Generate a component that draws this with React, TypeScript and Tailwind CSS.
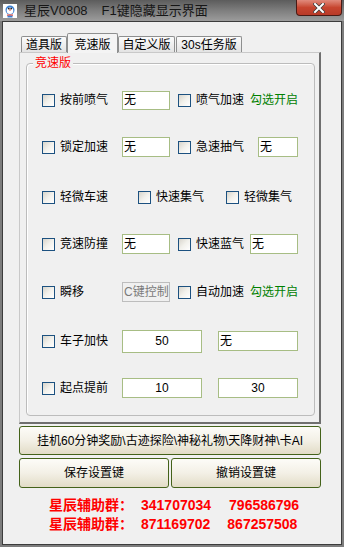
import React from 'react';

const font = "font-['Liberation_Sans','Noto_Sans_CJK_SC',sans-serif]";

function Box() {
  return (
    <span className="w-[13px] h-[13px] shrink-0 border border-[#1c5180] bg-gradient-to-br from-[#d8d5cc] via-[#f2f1ec] to-[#ffffff]" />
  );
}

function Check({ label, w }: { label: string; w: string }) {
  return (
    <div className={`flex items-center shrink-0 ${w}`}>
      <Box />
      <span className="ml-[5px] text-[12px] leading-none text-black whitespace-nowrap">{label}</span>
    </div>
  );
}

function Field({ value, w, h = 'h-[19px]', center = false }: { value: string; w: string; h?: string; center?: boolean }) {
  return (
    <div
      className={`${w} ${h} shrink-0 flex items-center border border-[#a7bd84] bg-white text-[12px] text-black leading-none ${
        center ? 'justify-center' : 'pl-[1px]'
      }`}
    >
      {value}
    </div>
  );
}

function Hint() {
  return <span className="text-[12px] leading-none text-[#008000] whitespace-nowrap">勾选开启</span>;
}

function Tab({ label, active, w }: { label: string; active?: boolean; w: string }) {
  if (active) {
    return (
      <div
        className={`${w} h-[20px] relative z-10 flex justify-center pt-[2px] border border-b-0 border-[#8e8f8f] rounded-t-[2px] bg-[#f4f4f4] text-[12px] text-black`}
      >
        {label}
      </div>
    );
  }
  return (
    <div
      className={`${w} h-[16px] mb-[1px] flex items-center justify-center border border-b-0 border-[#8e8f8f] rounded-t-[2px] bg-gradient-to-b from-[#fbfbfb] to-[#e3e3e3] text-[12px] text-black`}
    >
      {label}
    </div>
  );
}

function WinButton({ label, w, h }: { label: string; w: string; h: string }) {
  return (
    <button
      className={`${w} ${h} shrink-0 rounded-[3px] border border-[#44621a] bg-gradient-to-b from-[#fdfcf8] via-[#f3f0e6] to-[#e2dcc7] text-[12px] text-black whitespace-nowrap`}
    >
      {label}
    </button>
  );
}

function Icon() {
  return (
    <svg width="14" height="14" viewBox="0 0 14 14" className="shrink-0">
      <rect x="0" y="0" width="14" height="14" fill="#ffffff" />
      <circle cx="7" cy="6" r="4.5" fill="#3b7fd1" />
      <circle cx="7" cy="6.8" r="3.3" fill="#ffffff" />
      <circle cx="5.8" cy="4.6" r="0.9" fill="#222" />
      <circle cx="8.2" cy="4.6" r="0.9" fill="#222" />
      <circle cx="7" cy="6" r="0.8" fill="#e23a2e" />
      <rect x="4" y="10.5" width="6" height="1.2" fill="#e23a2e" />
      <rect x="4.5" y="11.7" width="5" height="1.8" fill="#3b7fd1" />
    </svg>
  );
}

export default function App() {
  return (
    <div className={`w-[344px] h-[547px] flex flex-col bg-[#7d7d7d] ${font}`}>
      {/* title bar */}
      <div className="h-[21px] shrink-0 flex items-center pl-[3px] bg-gradient-to-b from-[#5c5c5c] via-[#7e7e7e] to-[#9c9c9c]">
        <Icon />
        <span className="ml-[7px] text-[13px] leading-none text-[#161616] whitespace-nowrap">星辰V0808</span>
        <span className="ml-[14px] text-[13px] leading-none text-[#161616] whitespace-nowrap">F1键隐藏显示界面</span>
        <div className="ml-auto mr-[2px] self-start w-[46px] h-[16px] flex items-center justify-center rounded-b-[4px] border border-t-0 border-[#4a1a14] bg-gradient-to-b from-[#e08a7c] via-[#c7452f] to-[#b83a28]">
          <svg width="12" height="10" viewBox="0 0 12 10">
            <path d="M2 1 L10 9 M10 1 L2 9" stroke="#3a3a3a" strokeWidth="3.4" strokeLinecap="square" />
            <path d="M2 1 L10 9 M10 1 L2 9" stroke="#ffffff" strokeWidth="2" strokeLinecap="square" />
          </svg>
        </div>
      </div>

      {/* client area */}
      <div className="mx-[2px] mb-[2px] flex-1 flex flex-col border border-[#3c3c3c] bg-[#f0f0f0] pl-[16px]">
        {/* tabs */}
        <div className="mt-[11px] h-[20px] pl-[2px] flex items-end">
          <Tab label="道具版" w="w-[46px]" />
          <Tab label="竞速版" w="w-[51px]" active />
          <Tab label="自定义版" w="w-[57px]" />
          <div className="w-[1px]" />
          <Tab label="30s任务版" w="w-[66px]" />
        </div>

        {/* tab panel */}
        <div className="-mt-[1px] w-[302px] h-[372px] border-l border-t border-[#c9c9c9] border-r-2 border-b-2 border-r-[#6f6f6f] border-b-[#6f6f6f] bg-[#f0f0f0] pl-[6px] pt-[10px]">
          <div className="relative w-[289px] h-[353px] rounded-[4px] border border-[#bcbcbc] shadow-[inset_1px_1px_0_#ffffff] flex flex-col pl-[15px]">
            <span className="absolute left-[6px] -top-[8px] px-[2px] bg-[#f0f0f0] text-[12px] leading-[15px] text-[#ff0000]">
              竞速版
            </span>

            <div className="mt-[26px] h-[20px] flex items-center">
              <Check label="按前喷气" w="w-[80px]" />
              <Field value="无" w="w-[48px]" />
              <div className="w-[8px]" />
              <Check label="喷气加速" w="w-[72px]" />
              <Hint />
            </div>

            <div className="mt-[27px] h-[20px] flex items-center">
              <Check label="锁定加速" w="w-[80px]" />
              <Field value="无" w="w-[48px]" h="h-[20px]" />
              <div className="w-[8px]" />
              <Check label="急速抽气" w="w-[80px]" />
              <Field value="无" w="w-[40px]" h="h-[20px]" />
            </div>

            <div className="mt-[30px] h-[20px] flex items-center">
              <Check label="轻微车速" w="w-[96px]" />
              <Check label="快速集气" w="w-[88px]" />
              <Check label="轻微集气" w="w-[72px]" />
            </div>

            <div className="mt-[27px] h-[20px] flex items-center">
              <Check label="竞速防撞" w="w-[80px]" />
              <Field value="无" w="w-[48px]" h="h-[20px]" />
              <div className="w-[8px]" />
              <Check label="快速蓝气" w="w-[72px]" />
              <Field value="无" w="w-[48px]" h="h-[20px]" />
            </div>

            <div className="mt-[28px] h-[20px] flex items-center">
              <Check label="瞬移" w="w-[80px]" />
              <div className="w-[48px] h-[20px] shrink-0 flex items-center pl-[1px] border border-[#bdbdbd] bg-[#f0f0f0] text-[12px] leading-none text-[#7a7a7a] whitespace-nowrap">
                C键控制
              </div>
              <div className="w-[8px]" />
              <Check label="自动加速" w="w-[72px]" />
              <Hint />
            </div>

            <div className="mt-[29px] h-[20px] flex items-center">
              <Check label="车子加快" w="w-[80px]" />
              <Field value="50" w="w-[80px]" h="h-[23px]" center />
              <div className="w-[16px]" />
              <Field value="无" w="w-[80px]" h="h-[20px]" />
            </div>

            <div className="mt-[27px] h-[20px] flex items-center">
              <Check label="起点提前" w="w-[80px]" />
              <Field value="10" w="w-[80px]" h="h-[20px]" center />
              <div className="w-[16px]" />
              <Field value="30" w="w-[80px]" h="h-[20px]" center />
            </div>
          </div>
        </div>

        {/* buttons */}
        <div className="mt-[2px]">
          <WinButton label="挂机60分钟奖励\古迹探险\神秘礼物\天降财神\卡AI" w="w-[302px]" h="h-[29px]" />
        </div>
        <div className="mt-[3px] flex gap-[2px]">
          <WinButton label="保存设置键" w="w-[150px]" h="h-[30px]" />
          <WinButton label="撤销设置键" w="w-[150px]" h="h-[30px]" />
        </div>

        {/* group numbers */}
        <div className="mt-[8px] pl-[30px] flex flex-col text-[14px] font-bold leading-[19px] text-[#ff0000] whitespace-nowrap">
          <div className="flex">
            <span>星辰辅助群：</span>
            <span className="ml-[8px]">341707034</span>
            <span className="ml-[18px]">796586796</span>
          </div>
          <div className="flex">
            <span>星辰辅助群：</span>
            <span className="ml-[8px]">871169702</span>
            <span className="ml-[17px]">867257508</span>
          </div>
        </div>
      </div>
    </div>
  );
}
